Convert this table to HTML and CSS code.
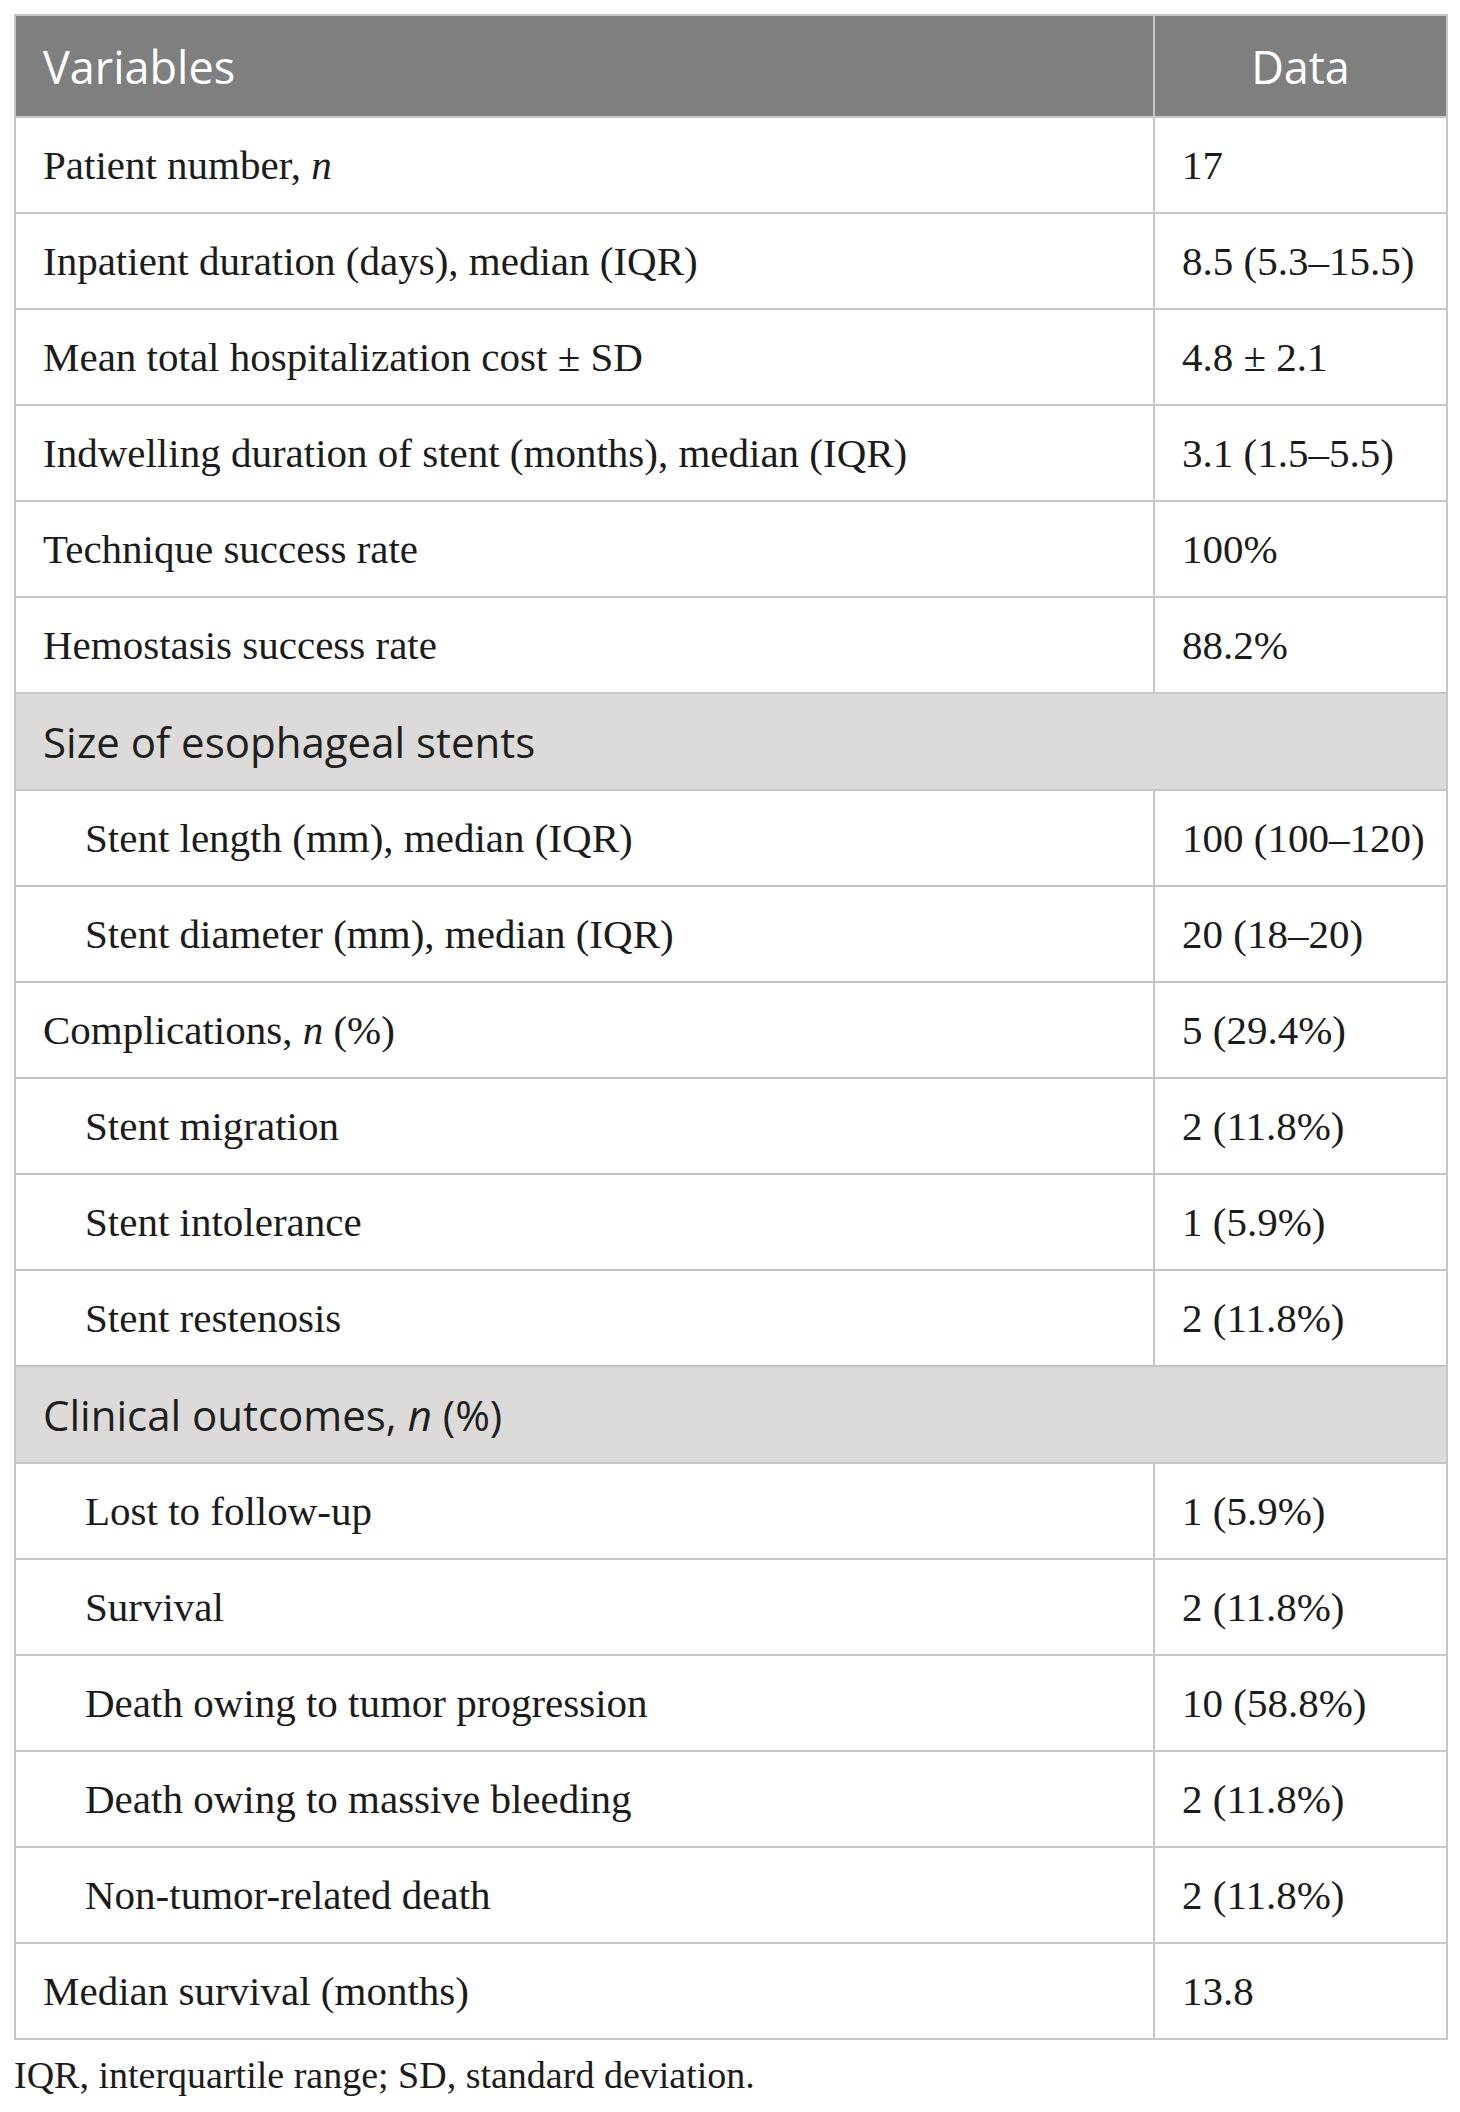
FILE: index.html
```html
<!DOCTYPE html>
<html lang="en">
<head>
<meta charset="utf-8">
<title>Table</title>
<link rel="stylesheet" href="styles.css">
</head>
<body>
<div class="wrap">
<table class="data-table">
  <colgroup><col class="col-var"><col class="col-data"></colgroup>
  <thead>
    <tr class="head-row"><th class="th-var">Variables</th><th class="th-data">Data</th></tr>
  </thead>
  <tbody>
    <tr><td>Patient number, <i>n</i></td><td>17</td></tr>
    <tr><td>Inpatient duration (days), median (IQR)</td><td>8.5 (5.3–15.5)</td></tr>
    <tr><td>Mean total hospitalization cost ± SD</td><td>4.8 ± 2.1</td></tr>
    <tr><td>Indwelling duration of stent (months), median (IQR)</td><td>3.1 (1.5–5.5)</td></tr>
    <tr><td>Technique success rate</td><td>100%</td></tr>
    <tr><td>Hemostasis success rate</td><td>88.2%</td></tr>
    <tr class="section-row"><td colspan="2">Size of esophageal stents</td></tr>
    <tr><td class="indent">Stent length (mm), median (IQR)</td><td>100 (100–120)</td></tr>
    <tr><td class="indent">Stent diameter (mm), median (IQR)</td><td>20 (18–20)</td></tr>
    <tr><td>Complications, <i>n</i> (%)</td><td>5 (29.4%)</td></tr>
    <tr><td class="indent">Stent migration</td><td>2 (11.8%)</td></tr>
    <tr><td class="indent">Stent intolerance</td><td>1 (5.9%)</td></tr>
    <tr><td class="indent">Stent restenosis</td><td>2 (11.8%)</td></tr>
    <tr class="section-row"><td colspan="2">Clinical outcomes, <i>n</i> (%)</td></tr>
    <tr><td class="indent">Lost to follow-up</td><td>1 (5.9%)</td></tr>
    <tr><td class="indent">Survival</td><td>2 (11.8%)</td></tr>
    <tr><td class="indent">Death owing to tumor progression</td><td>10 (58.8%)</td></tr>
    <tr><td class="indent">Death owing to massive bleeding</td><td>2 (11.8%)</td></tr>
    <tr><td class="indent">Non-tumor-related death</td><td>2 (11.8%)</td></tr>
    <tr><td>Median survival (months)</td><td>13.8</td></tr>
  </tbody>
</table>
<p class="caption">IQR, interquartile range; SD, standard deviation.</p>
</div>
</body>
</html>
```

FILE: styles.css
```css
html, body {
  margin: 0;
  padding: 0;
  background: #ffffff;
}

.wrap {
  padding: 14px 0 0 14px;
  width: 1432px;
}

.data-table {
  border-collapse: collapse;
  width: 1432px;
  table-layout: fixed;
  font-family: "Liberation Serif", "Times New Roman", serif;
  font-size: 41px;
  color: #1b1b1b;
}

.col-var { width: 1139px; }
.col-data { width: 293px; }

.data-table th,
.data-table td {
  border: 2px solid #c6c6c6;
  padding: 0 0 0 27px;
  text-align: left;
  vertical-align: middle;
  white-space: nowrap;
}

.data-table tbody tr { height: 96px; }

.head-row { height: 102px; }

.data-table th {
  background: #7f7f7f;
  color: #ffffff;
  font-family: "Open Sans", "Noto Sans", sans-serif;
  font-weight: 400;
  font-size: 45px;
}

.data-table th.th-data {
  text-align: center;
  padding: 0;
}

.data-table td.indent {
  padding-left: 69px;
}

.data-table tbody tr.section-row { height: 97px; }

.section-row td {
  background: #dcdbda;
  font-family: "Open Sans", "Noto Sans", sans-serif;
  font-size: 42px;
  color: #1e1e1e;
}

.caption {
  margin: 13px 0 0 0;
  font-family: "Liberation Serif", "Times New Roman", serif;
  font-size: 38px;
  color: #1b1b1b;
}
```
